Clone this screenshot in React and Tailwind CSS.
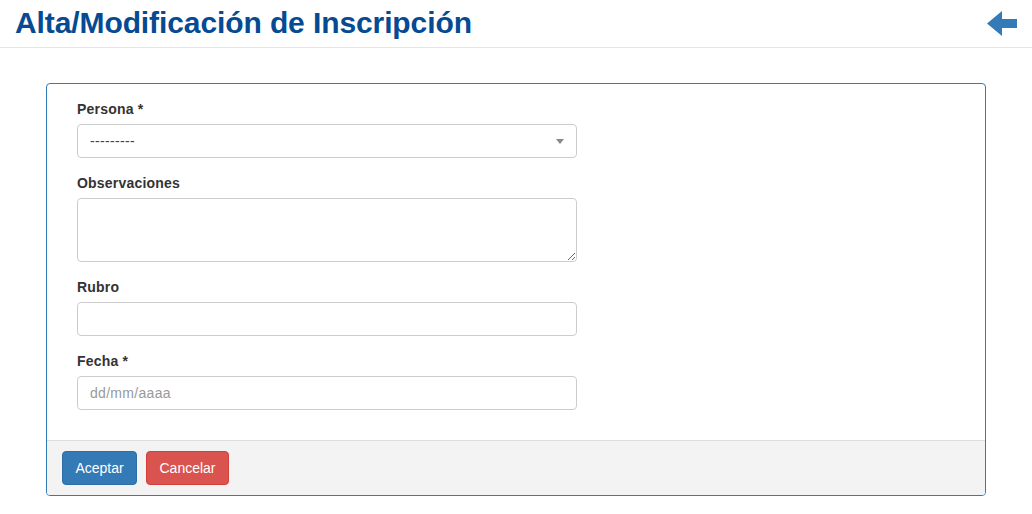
import React from 'react'

const FONT = { fontFamily: '"Liberation Sans", Arial, sans-serif' }

function BackArrow() {
  return (
    <svg width="31" height="25" viewBox="0 0 31 25" className="block">
      <path d="M0 12.5 L15 0 L15 8 L30 8 L30 17 L15 17 L15 25 Z" fill="#337ab7" />
    </svg>
  )
}

function Field({ label, children }) {
  return (
    <div className="mb-[15px]">
      <label className="block mb-[5px] text-[14px] leading-[20px] font-bold text-[#333] tracking-[0.2px]">{label}</label>
      {children}
    </div>
  )
}

export default function App() {
  return (
    <div className="w-[1032px] h-[514px] bg-white text-[#333]" style={FONT}>
      {/* Header */}
      <div className="h-[48px] border-b border-[#e5e5e5] flex items-center justify-between pl-[15px] pr-[14px]">
        <h1 className="text-[30px] leading-[36px] font-bold text-[#054a92] -mt-[1px] tracking-[-0.1px]">Alta/Modificación de Inscripción</h1>
        <div className="-mt-[1px]">
          <BackArrow />
        </div>
      </div>

      {/* Panel */}
      <div className="pt-[35px] px-[46px]">
        <div className="border border-[#337ab7] rounded-[4px] overflow-hidden">
          <div className="pt-[15px] pb-[15px] px-[30px]">
            <Field label="Persona *">
              <div className="w-[500px] h-[34px] border border-[#ccc] rounded-[4px] flex items-center justify-between pl-[12px] pr-[12px]">
                <span className="text-[14px] text-[#444] tracking-[0.35px]">---------</span>
                <span className="w-0 h-0 border-l-[4px] border-r-[4px] border-t-[5px] border-l-transparent border-r-transparent border-t-[#888]" />
              </div>
            </Field>
            <Field label="Observaciones">
              <textarea className="block w-[500px] h-[64px] border border-[#ccc] rounded-[4px] px-[12px] py-[6px] text-[14px] outline-none" />
            </Field>
            <Field label="Rubro">
              <input className="block w-[500px] h-[34px] border border-[#ccc] rounded-[4px] px-[12px] text-[14px] outline-none" />
            </Field>
            <Field label="Fecha *">
              <input
                placeholder="dd/mm/aaaa"
                className="block w-[500px] h-[34px] border border-[#ccc] rounded-[4px] px-[12px] text-[14px] tracking-[0.3px] outline-none placeholder:text-[#999]"
              />
            </Field>
          </div>
          <div className="bg-[#f3f3f3] border-t border-[#ddd] px-[15px] py-[10px] flex gap-[9px]">
            <button className="h-[34px] w-[75px] bg-[#337ab7] border border-[#2e6da4] rounded-[4px] text-white text-[14px]">Aceptar</button>
            <button className="h-[34px] w-[83px] bg-[#d9534f] border border-[#d43f3a] rounded-[4px] text-white text-[14px]">Cancelar</button>
          </div>
        </div>
      </div>
    </div>
  )
}
